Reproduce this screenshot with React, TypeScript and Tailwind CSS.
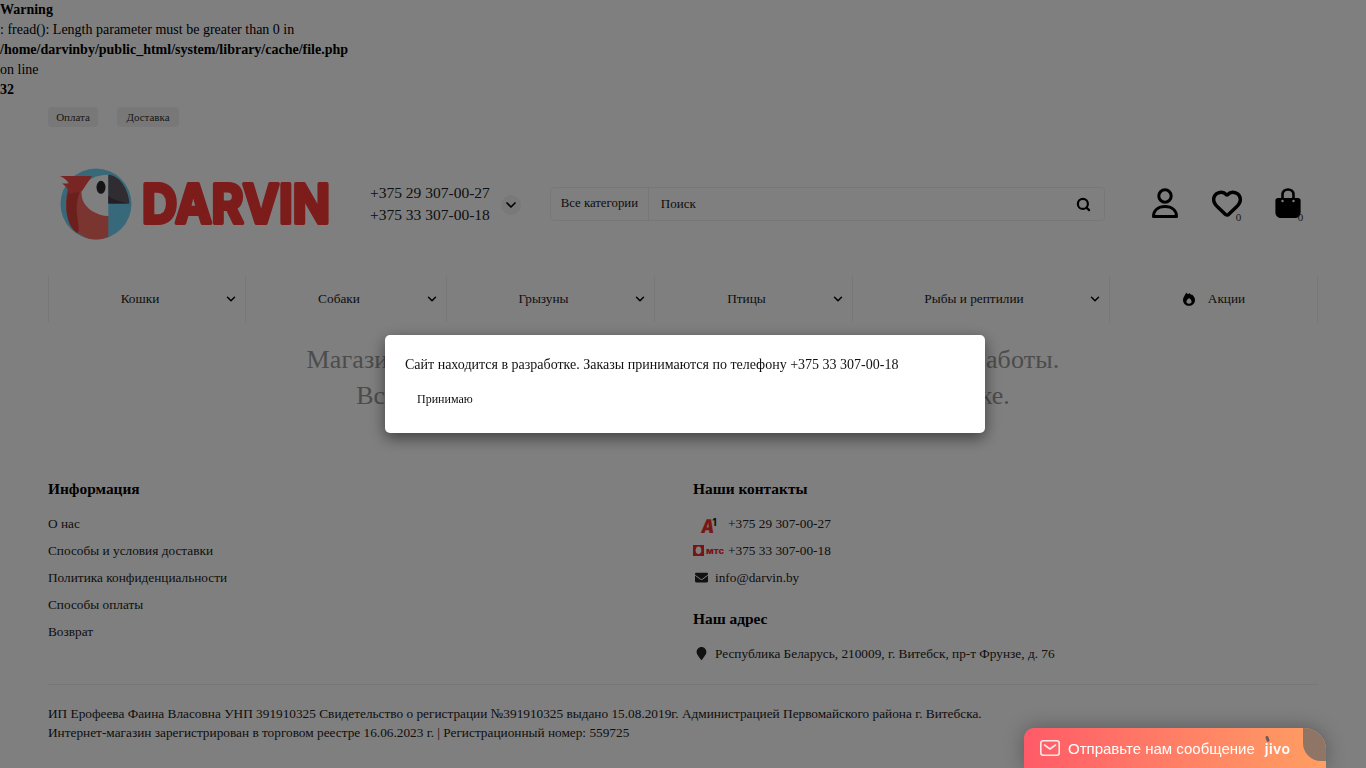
import { ChevronDown, Heart, Search } from 'lucide-react';
import { FaEnvelope, FaMapMarker } from 'react-icons/fa';

const menuItems = [
    { label: 'Кошки', width: 'w-[197px]' },
    { label: 'Собаки', width: 'w-[201px]' },
    { label: 'Грызуны', width: 'w-[208px]' },
    { label: 'Птицы', width: 'w-[198px]' },
    { label: 'Рыбы и рептилии', width: 'w-[257px]' },
];

const infoLinks = ['О нас', 'Способы и условия доставки', 'Политика конфиденциальности', 'Способы оплаты', 'Возврат'];

function Logo() {
    return (
        <svg width="280" height="80" viewBox="0 0 280 80">
            <defs>
                <clipPath id="disc">
                    <circle cx="40" cy="40" r="35.5" />
                </clipPath>
            </defs>
            <circle cx="40" cy="40" r="35.5" fill="#6fd3f5" />
            <g clipPath="url(#disc)">
                <path d="M52.3 52C42 50 32 45 28 38L26 20L12 24C8 40 10 60 20 68L40 80L52.3 80Z" fill="#f56a62" />
                <path d="M13 24C8 42 10 60 20 68C25 72 22 60 21 50C20 40 22 32 26 22Z" fill="#d9403c" />
                <path d="M52.3 10.8C40 10.8 30 16 26 25C24 33 28 42 36 47C41 50 47 52 52.3 52Z" fill="#ffffff" />
                <path d="M52.3 10.8C63 11 72 24 73.5 39.5L52.3 39.5Z" fill="#5f5965" />
                <path d="M52.3 32C58 36 66 38 73.5 39.5L52.3 39.5Z" fill="#463f4c" />
            </g>
            <path d="M4 12L36 12L26 27L13 30C13 26 10 22 6 19.5L13 19.5C11 16 8 14 4 12Z" fill="#f04a46" />
            <ellipse cx="45" cy="23.3" rx="4.5" ry="6.5" fill="#2a2a30" />
            <text
                x="86"
                y="58.5"
                fontFamily="Inter, sans-serif"
                fontWeight="700"
                fontSize="53"
                textLength="188"
                lengthAdjust="spacingAndGlyphs"
                fill="#f83a36"
                stroke="#f83a36"
                strokeWidth="4"
                strokeLinejoin="round"
            >
                DARVIN
            </text>
        </svg>
    );
}

function UserIcon() {
    return (
        <svg width="26" height="30" viewBox="0 0 26 30" fill="none" stroke="#000" strokeWidth="3">
            <circle cx="13" cy="8" r="6.2" />
            <path d="M1.5 28.5C1.5 22 6.5 18.5 13 18.5C19.5 18.5 24.5 22 24.5 28.5Z" strokeLinejoin="round" />
        </svg>
    );
}

function BagIcon() {
    return (
        <svg width="26" height="30" viewBox="0 0 26 30">
            <path d="M7.5 10V6.5C7.5 3.4 10 1.5 13 1.5C16 1.5 18.5 3.4 18.5 6.5V10" fill="none" stroke="#000" strokeWidth="2.6" />
            <path d="M3 10H23C24.6 10 25.6 11 25.6 12.6V24C25.6 27.6 23.6 30 20 30H6C2.4 30 0.4 27.6 0.4 24V12.6C0.4 11 1.4 10 3 10Z" fill="#000" />
            <circle cx="7.5" cy="13" r="1.2" fill="#fff" />
            <circle cx="18.5" cy="13" r="1.2" fill="#fff" />
        </svg>
    );
}

function FireIcon() {
    return (
        <svg width="12" height="14" viewBox="0 0 14 16">
            <path d="M4 0.5C5 2.5 6.5 3 8 1C8.3 2.5 9.5 3.5 10.5 2.8C12.5 4.5 14 7 14 9.2C14 13 11 16 7 16C3 16 0 13 0 9.2C0 6 2.5 3.5 4 0.5Z" fill="#000" />
            <path d="M7 6.5C7.5 8 10 8.5 10 11C10 12.8 8.7 13.5 7 13.5C5.3 13.5 4 12.8 4 11C4 9.5 5.5 9 5.5 8C6.2 8 6.8 7.5 7 6.5Z" fill="#fff" />
        </svg>
    );
}

function A1Logo() {
    return (
        <svg width="20" height="18" viewBox="0 0 20 18" className="overflow-visible">
            <text x="4" y="17.5" transform="skewX(-8)" fontFamily="Inter, sans-serif" fontWeight="900" fontSize="19" fill="#f0302c" textLength="13" lengthAdjust="spacingAndGlyphs">A</text>
            <text x="13.5" y="10.5" fontFamily="Inter, sans-serif" fontWeight="800" fontSize="11" fill="#222" textLength="4" lengthAdjust="spacingAndGlyphs">1</text>
        </svg>
    );
}

function MtsLogo() {
    return (
        <svg width="31" height="11" viewBox="0 0 31 11">
            <rect x="0" y="0" width="11" height="11" fill="#ee2a2a" />
            <ellipse cx="5.5" cy="5.2" rx="2.8" ry="3.8" fill="#fff" />
            <text x="13" y="8.5" fontFamily="Inter, sans-serif" fontWeight="800" fontSize="8.5" fill="#ee2a2a" textLength="18" lengthAdjust="spacingAndGlyphs">мтс</text>
        </svg>
    );
}

function FooterLogoRow({ logo, text }: { logo: React.ReactNode; text: string }) {
    return (
        <div className="flex h-[27px] items-center">
            <div className="flex w-[35px] items-center justify-center pr-[4px]">{logo}</div>
            <span>{text}</span>
        </div>
    );
}

export default function App() {
    return (
        <div className="relative h-screen overflow-hidden bg-white font-['Liberation_Serif',serif] text-black">
            <div className="text-[14px] leading-[20px]">
                <b className="block">Warning</b>
                <div>: fread(): Length parameter must be greater than 0 in</div>
                <b className="block">/home/darvinby/public_html/system/library/cache/file.php</b>
                <div>on line</div>
                <b className="block">32</b>
            </div>

            <div className="px-[48px]">
                <div className="mt-[7px] flex gap-[19px] text-[11px] text-[#333]">
                    <span className="flex h-[20px] w-[50px] items-center justify-center rounded-[4px] bg-[#f0f0f0]">Оплата</span>
                    <span className="flex h-[20px] w-[62px] items-center justify-center rounded-[4px] bg-[#f0f0f0]">Доставка</span>
                </div>

                <header className="mt-[28px] flex h-[98px] items-center">
                    <div className="ml-[8px] w-[314px]">
                        <Logo />
                    </div>
                    <div className="text-[15.5px] leading-[22px] text-[#222]">
                        <div>+375 29 307-00-27</div>
                        <div>+375 33 307-00-18</div>
                    </div>
                    <div className="ml-[11px] mt-[2px] flex h-[20px] w-[20px] items-center justify-center rounded-full bg-[#f2f2f2]">
                        <ChevronDown size={16} strokeWidth={2.5} />
                    </div>
                    <div className="ml-[29px] flex h-[34px] w-[555px] items-center rounded-[4px] border border-[#eeeeee] text-[13px] text-[#222]">
                        <div className="flex h-full w-[98px] items-center justify-center border-r border-[#eeeeee] pb-[1px] text-[12.8px]">Все категории</div>
                        <div className="flex-1 pl-[12px]">Поиск</div>
                        <Search size={15} strokeWidth={3.5} className="mr-[13px] text-black" />
                    </div>
                    <div className="ml-[47px] mt-[-2px]">
                        <UserIcon />
                    </div>
                    <div className="relative ml-[33px] mt-[-2px]">
                        <Heart size={32} strokeWidth={2.6} />
                        <span className="absolute left-[25px] top-[22px] text-[11px] text-[#333]">0</span>
                    </div>
                    <div className="relative ml-[32px] mt-[-2px]">
                        <BagIcon />
                        <span className="absolute left-[23px] top-[21px] text-[11px] text-[#333]">0</span>
                    </div>
                </header>

                <nav className="mt-[23px] flex h-[46px] text-[13.3px] text-[#222]">
                    {menuItems.map((item) => (
                        <div key={item.label} className={`relative flex items-center justify-center border-l border-[#eeeeee] pr-[14px] ${item.width}`}>
                            {item.label}
                            <ChevronDown size={14} strokeWidth={2.5} className="absolute right-[7px] top-[16px] text-black" />
                        </div>
                    ))}
                    <div className="flex w-[209px] items-center justify-center gap-[13px] border-x border-[#eeeeee] pl-[1px]">
                        <FireIcon />
                        Акции
                    </div>
                </nav>

                <div className="mt-[20px] text-center text-[26px] leading-[36px] text-[#999999]">
                    <div className="tracking-[0.11px]">Магазин находится в разработке. Совсем скоро завершатся работы.</div>
                    <div>Все заказы принимаются по телефону и в нашей рассылке.</div>
                </div>

                <footer className="mt-[65px] text-[13.3px] text-[#222]">
                    <div className="flex">
                        <div className="w-[645px]">
                            <h4 className="mb-[11px] h-[20px] text-[15.4px] font-bold leading-[20px] text-black">Информация</h4>
                            {infoLinks.map((link) => (
                                <div key={link} className="flex h-[27px] items-center">{link}</div>
                            ))}
                        </div>
                        <div className="flex-1">
                            <h4 className="mb-[11px] h-[20px] text-[15.4px] font-bold leading-[20px] text-black">Наши контакты</h4>
                            <FooterLogoRow logo={<A1Logo />} text="+375 29 307-00-27" />
                            <FooterLogoRow logo={<MtsLogo />} text="+375 33 307-00-18" />
                            <div className="flex h-[27px] items-center">
                                <div className="flex w-[22px] justify-start pl-[2px]"><FaEnvelope size={13} /></div>
                                info@darvin.by
                            </div>
                            <h4 className="mt-[18px] h-[20px] text-[15.4px] font-bold leading-[20px] text-black">Наш адрес</h4>
                            <div className="mt-[11px] flex h-[27px] items-center">
                                <div className="flex w-[22px] justify-start pl-[2px]"><FaMapMarker size={13} /></div>
                                Республика Беларусь, 210009, г. Витебск, пр-т Фрунзе, д. 76
                            </div>
                        </div>
                    </div>
                    <div className="mt-[17px] border-t border-[#eeeeee] pt-[19px] leading-[19px]">
                        <div>ИП Ерофеева Фаина Власовна УНП 391910325 Свидетельство о регистрации №391910325 выдано 15.08.2019г. Администрацией Первомайского района г. Витебска.</div>
                        <div>Интернет-магазин зарегистрирован в торговом реестре 16.06.2023 г. | Регистрационный номер: 559725</div>
                    </div>
                </footer>
            </div>

            <div className="fixed inset-0 bg-black/50" />

            <div className="fixed left-[385px] top-[335px] h-[98px] w-[600px] rounded-[5px] bg-white px-[20px] pt-[20px] shadow-[0_5px_15px_rgba(0,0,0,0.5)]">
                <p className="text-[14px] leading-[20px] text-[#111]">Сайт находится в разработке. Заказы принимаются по телефону +375 33 307-00-18</p>
                <button className="ml-[12px] mt-[15px] text-[12px] leading-[18px] text-[#111]">Принимаю</button>
            </div>

            <div className="fixed bottom-0 left-[1024px] flex h-[40px] w-[302px] items-center overflow-hidden rounded-tl-[10px] rounded-tr-[22px] bg-gradient-to-r from-[#ff5a68] to-[#ff9e62] pl-[16px] font-['Liberation_Sans',sans-serif] text-[15px] text-white shadow-[0_0_20px_rgba(0,0,0,0.3)]">
                <svg width="20" height="16" viewBox="0 0 20 16" fill="none" stroke="#ffffff" strokeOpacity="0.85" strokeWidth="1.6">
                    <rect x="0.8" y="0.8" width="18.4" height="14.4" rx="2.5" />
                    <path d="M4.5 5L10 9L15.5 5" strokeLinecap="round" strokeLinejoin="round" />
                </svg>
                <span className="ml-[8px] pt-[2px]">Отправьте нам сообщение</span>
                <span className="relative ml-[10px] pt-[1px] font-['Inter',sans-serif] text-[14px] font-semibold tracking-[0.5px]">
                    jivo
                    <span className="absolute left-[1px] top-[-1px] h-[6px] w-[2.5px] rotate-[-20deg] rounded-full bg-[#6b5c5c]" />
                </span>
                <div className="absolute right-0 top-0 h-[33px] w-[23px] rounded-bl-[18px] bg-[#8f7565]" />
            </div>
        </div>
    );
}
